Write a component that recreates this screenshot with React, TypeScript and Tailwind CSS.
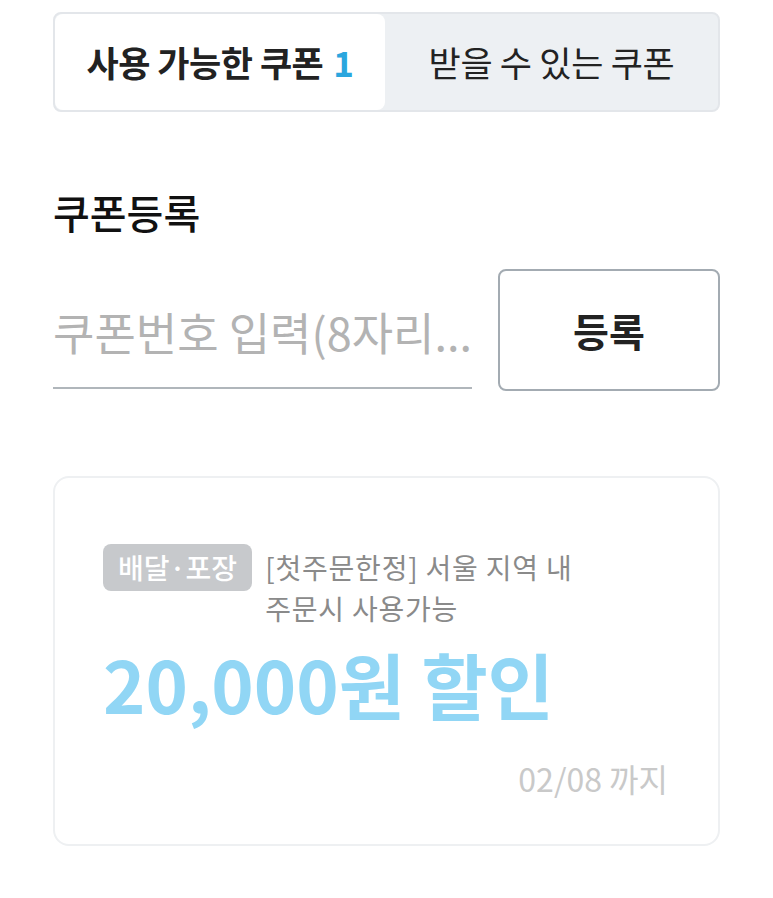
const FONT = "font-['Noto_Sans_CJK_KR','Noto_Sans',sans-serif]";

export default function App() {
  return (
    <div className={`${FONT} w-[773px] h-[898px] bg-white px-[53px] pt-[12px]`}>
      {/* tabs */}
      <div className="flex h-[100px] rounded-[8px] border-2 border-[#e3e6ea] bg-[#edf0f3]">
        <div className="flex w-[330px] items-center justify-center rounded-[8px] bg-white text-[35px] font-bold tracking-[-0.5px] text-[#222]">
          사용 가능한 쿠폰 <span className="ml-[10px] text-[#2ba6de]">1</span>
        </div>
        <div className="flex flex-1 items-center justify-center text-[35px] tracking-[-0.3px] text-[#222]">
          받을 수 있는 쿠폰
        </div>
      </div>

      {/* register */}
      <h2 className="mt-[76px] text-[40px] font-medium leading-[48px] text-[#111]">쿠폰등록</h2>
      <div className="mt-[33px] flex gap-[26px]">
        <div className="flex h-[120px] w-[419px] items-center overflow-visible border-b-2 border-[#b0b6bb] pt-[8px]">
          <span className="whitespace-nowrap text-[45px] text-[#b3b3b3]">쿠폰번호 입력(8자리...</span>
        </div>
        <button className="flex h-[122px] flex-1 items-center justify-center rounded-[8px] border-2 border-[#a3abb2] bg-white text-[39px] font-bold text-[#222]">
          등록
        </button>
      </div>

      {/* coupon card */}
      <div className="mt-[85px] h-[370px] rounded-[16px] border-2 border-[#eef0f2] bg-white pl-[48px] pr-[50px] pt-[66px]">
        <div className="flex items-start gap-[13px]">
          <span className="rounded-[8px] bg-[#c7c9cc] px-[15px] text-[28px] leading-[47px] font-medium text-white">
            배달·포장
          </span>
          <p className="pt-[3px] text-[28px] leading-[41px] tracking-[0.8px] text-[#8a8a8a]">
            [첫주문한정] 서울 지역 내<br />주문시 사용가능
          </p>
        </div>
        <div className="mt-[2px] text-[72px] font-bold leading-[104px] text-[#91d6f5]">20,000원 할인</div>
        <div className="mt-[20px] text-right text-[32px] leading-[47px] text-[#c9c9c9]">02/08 까지</div>
      </div>
    </div>
  );
}
